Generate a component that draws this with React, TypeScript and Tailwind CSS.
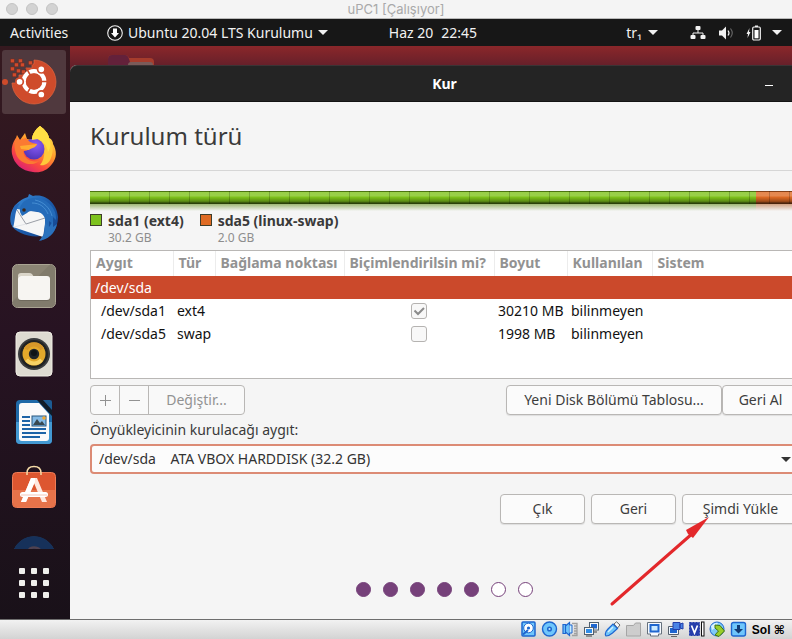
import type { ReactNode } from "react";

const dockIcons: { name: string; active?: boolean; art: ReactNode }[] = [
  { name: "Ubuntu Kurulumu", active: true, art: <InstallerArt /> },
  { name: "Firefox", art: <FirefoxArt /> },
  { name: "Thunderbird", art: <ThunderbirdArt /> },
  { name: "Dosyalar", art: <FilesArt /> },
  { name: "Rhythmbox", art: <RhythmboxArt /> },
  { name: "LibreOffice Writer", art: <WriterArt /> },
  { name: "Ubuntu Software", art: <SoftwareArt /> },
  { name: "Yardım", art: <HelpArt /> },
];

function InstallerArt() {
  const bits = [
    [8.5, 9], [16.5, 9], [12.5, 13], [18.5, 13], [26.5, 11], [8.5, 17], [14.5, 19], [19.5, 20], [10.5, 23],
  ];
  return (
    <>
      <path
        d="M32 10a22 22 0 1 1-22 23h4v-4h3v-4h4v-3h4v-4h5v-4h2z"
        fill="#cf4b2b"
        stroke="#e2653f"
        strokeWidth=".7"
      />
      {bits.map(([x, y]) => (
        <rect key={`${x}-${y}`} x={x} y={y} width="3.8" height="3.8" fill="#d14a2b" stroke="#6d2c22" strokeWidth=".5" />
      ))}
      <circle cx="32" cy="31.500" r="10.300" fill="none" stroke="#fff" strokeWidth="4.200" />
      <path d="M32 31.500H48M32 31.500L24 17.600M32 31.500L24 45.400" stroke="#cf4b2b" strokeWidth="1.600" />
      <circle cx="32" cy="31.500" r="8" fill="#cf4b2b" />
      {[[39.3, 19.3], [39.3, 44.5], [17.6, 31.8]].map(([x, y]) => (
        <circle key={`${x}-${y}`} cx={x} cy={y} r="3.700" fill="#fff" stroke="#cf4b2b" strokeWidth="1.700" />
      ))}
    </>
  );
}

function FirefoxArt() {
  return (
    <>
      <defs>
        <linearGradient id="fxBody" x1=".8" y1=".1" x2=".25" y2="1">
          <stop offset="0" stopColor="#ffe14a" />
          <stop offset=".4" stopColor="#ff9a2b" />
          <stop offset=".7" stopColor="#fb4a3e" />
          <stop offset="1" stopColor="#d81b7a" />
        </linearGradient>
        <radialGradient id="fxGlobe" cx=".6" cy=".3" r=".8">
          <stop offset="0" stopColor="#8a5cf7" />
          <stop offset="1" stopColor="#4a2fb0" />
        </radialGradient>
      </defs>
      <path
        d="M38 8C43 12 46 15 47 20C50 21 51 24 51 26C55 33 55 40 50 46C45 53 38 55 31 54C20 53 12 46 10 36C9 29 11 24 14 20L15 17L18 22L23 15L25 21L30 22C30 16 34 11 38 8Z"
        fill="url(#fxBody)"
      />
      <path d="M38 8C43 12 46 15 47 20C51 24 52 33 49 40C47 46 42 48 38 47C44 40 44 28 36 22L30 22C30 16 34 11 38 8Z" fill="#ffc93a" />
      <circle cx="32" cy="31" r="10.500" fill="url(#fxGlobe)" />
      <path d="M14 20L18 22L24 20C27 24 30 25 35 26C34 29 30 29 28 30C26 33 22 33 21 33C22 41 30 45 37 43C31 49 17 46 14 36C12 30 12 25 14 20Z" fill="#fb7a32" />
      <path d="M18 28L35 26C34 30 29 30 27 32L19 31Z" fill="#ffad32" />
      <path d="M38 8C43 12 46 15 47 20C49 25 49 30 46 34C45 27 41 24 36 21L30 22C30 16 34 11 38 8Z" fill="#ffdf45" />
    </>
  );
}

function ThunderbirdArt() {
  return (
    <>
      <defs>
        <linearGradient id="tbBody" x1="0" y1="0" x2="1" y2="1">
          <stop offset="0" stopColor="#3c90dc" />
          <stop offset=".5" stopColor="#1c5cab" />
          <stop offset="1" stopColor="#123f86" />
        </linearGradient>
      </defs>
      <path d="M27 8L31 10C44 7 55 18 56 31C56 43 49 52 38 55L43 49C32 53 13 48 9 38C6 25 15 14 26 11Z" fill="url(#tbBody)" />
      <path d="M15 23L42 27L44 33L41 51L11 41C10 36 11 29 15 23Z" fill="#f6f6f6" />
      <path d="M15 24L24 38L43 32" fill="none" stroke="#9a9ea6" strokeWidth="1" />
      <path d="M24 38L12 41" fill="none" stroke="#dcdee2" strokeWidth=".8" />
      <path d="M19 28C15 20 23 11 34 12C46 13 55 23 54 34L51 31L51 38L47 35L47 42L43 39L43 33C42 26 30 22 25 27L20 30Z" fill="#246bb9" />
      <path d="M33 14C42 16 48 22 50 30M30 17C38 17 43 21 46 28" fill="none" stroke="#4d96d8" strokeWidth=".8" />
      <path d="M43 37L42 48L37 55C46 53 53 48 55 38L51 41L51 35L47 41Z" fill="#2a72bd" />
      <path d="M13 19C9 25 8 35 11 42C14 31 12 26 18 17Z" fill="#2467b7" />
      <circle cx="22" cy="24" r="1.800" fill="#3c2618" />
    </>
  );
}

function FilesArt() {
  return (
    <>
      <rect x="10.500" y="10.500" width="43" height="43" rx="5" fill="#8b8474" stroke="#aaa493" />
      <path d="M10 48L48 10.500Q53 10 53 15V49Q53 53 48 53H15Q10 53 10 48Z" fill="#777163" opacity=".5" />
      <path d="M16 22Q16 19 19 19H27Q29 19 30 20L32 23V28H16Z" fill="#dbd6ca" />
      <rect x="16" y="22" width="32" height="25" rx="3" fill="#5d584c" opacity=".5" />
      <rect x="16" y="22" width="32" height="24" rx="3" fill="#f7f5f2" />
    </>
  );
}

function RhythmboxArt() {
  return (
    <>
      <rect x="14" y="10" width="36" height="44" rx="4" fill="#dedbd1" stroke="#f1eee5" />
      <circle cx="32" cy="32" r="16" fill="#3a3c3e" />
      <circle cx="32" cy="32" r="14" fill="#202223" />
      <circle cx="32" cy="32" r="11.500" fill="#e2a82b" />
      <path d="M22 26A11.500 11.500 0 0 1 42 26L32 32Z" fill="#d6982a" />
      <path d="M23 39A11.500 11.500 0 0 0 41 39L32 32Z" fill="#f6d265" />
      <circle cx="32" cy="32" r="7.500" fill="#e2a82b" />
      <circle cx="32" cy="32" r="5.200" fill="#202528" />
      <circle cx="32" cy="31" r="3" fill="#101416" />
    </>
  );
}

function WriterArt() {
  return (
    <>
      <path d="M18 10H40L50 21V50Q50 54 46 54H18Q14 54 14 50V14Q14 10 18 10Z" fill="#1f6aa8" />
      <path d="M14 32H50V50Q50 54 46 54H18Q14 54 14 50Z" fill="#4399d2" />
      <path d="M20 13H37L47 24V48Q47 51 44 51H20Q17 51 17 48V16Q17 13 20 13Z" fill="#fafafa" />
      <path d="M35 10H41L50 20V26Z" fill="#101c28" />
      <path d="M41 10H48Q50 10 50 12V20Z" fill="#1c5c93" />
      <path d="M20 27H28M20 31H28M20 35H28M20 39H44M20 43H44M20 47H38" stroke="#1d64a7" strokeWidth="2" />
      <rect x="30" y="26" width="14" height="10" fill="#84bae5" stroke="#27567f" />
      <path d="M31 35L35 29L38 33L40 31L43 35Z" fill="#394850" />
      <circle cx="42" cy="28" r="1.800" fill="#f3a72d" />
    </>
  );
}

function SoftwareArt() {
  return (
    <>
      <rect x="10.500" y="14.500" width="43" height="35" rx="4" fill="#dd5630" stroke="#ed7c56" />
      <path d="M11 32H53V45Q53 49 49 49H15Q11 49 11 45Z" fill="#e6734a" />
      <path d="M25 17V15Q25 8.500 32 8.500T39 15V17" fill="none" stroke="#f5dba7" strokeWidth="1.500" />
      <path d="M29 20H35L45 44H40L32 25L24 44H19Z" fill="#ffe8df" />
      <path d="M29 20H33V24L24 44H19Z" fill="#fff" />
      <rect x="18" y="34" width="28" height="5" rx="2.500" fill="#fff" />
      <path d="M19 37H45" stroke="#f0b8a5" strokeWidth=".8" />
    </>
  );
}

function HelpArt() {
  return (
    <>
      <circle cx="32" cy="32.500" r="21.500" fill="#1b3a66" stroke="#335986" />
      <path d="M12 23A22 22 0 0 1 52 23Z" fill="#16315a" />
      <path d="M27 24Q28 21.500 32 21.500T38 24" fill="none" stroke="#4f4250" strokeWidth="2.500" />
    </>
  );
}

function Caret({ className = "" }: { className?: string }) {
  return (
    <svg viewBox="0 0 10 5" className={`h-[5px] w-[10px] shrink-0 ${className}`} aria-hidden="true">
      <path d="M0 0H10L5 5Z" fill="currentColor" />
    </svg>
  );
}

function Panel() {
  return (
    <header className="flex h-[27px] shrink-0 items-center bg-[#171717] text-[14px] leading-none text-[#f2f2f2]">
      <div className="flex flex-[390] items-center whitespace-nowrap pl-[10px]">
        <button type="button" className="w-[97px] text-left">Activities</button>
        <button type="button" className="flex items-center gap-[5px]">
          <svg viewBox="0 0 16 16" className="size-4" aria-hidden="true">
            <circle cx="8" cy="8" r="7.300" fill="none" stroke="#f2f2f2" strokeWidth="1.100" />
            <path d="M6 3.500H10V8H12L8 12.500L4 8H6Z" fill="#fff" />
          </svg>
          Ubuntu 20.04 LTS Kurulumu
          <Caret />
        </button>
      </div>
      <button type="button" className="flex gap-2 whitespace-nowrap">
        <span>Haz 20</span>
        <span>22:45</span>
      </button>
      <div className="flex flex-[314] items-center justify-end pr-[10px]">
        <button type="button" className="mr-[32px] flex items-center gap-[6px]">
          <span>tr₁</span>
          <Caret />
        </button>
        <button type="button" aria-label="Sistem" className="flex items-center">
          <svg viewBox="0 0 16 16" className="mr-3 size-4" aria-hidden="true">
            <path d="M8 4V8M3 11V8H13V11" fill="none" stroke="#f2f2f2" />
            <rect x="5.500" y="1" width="5" height="4" rx="1" fill="#f2f2f2" />
            <rect x="0.500" y="10" width="5" height="4" rx="1" fill="#f2f2f2" />
            <rect x="10.500" y="10" width="5" height="4" rx="1" fill="#f2f2f2" />
          </svg>
          <svg viewBox="0 0 16 16" className="mr-3 size-4" aria-hidden="true">
            <path d="M1 5.500H4L8 1.500V14.500L4 10.500H1Z" fill="#f2f2f2" />
            <path d="M10 5.500Q12 8 10 10.500" fill="none" stroke="#f2f2f2" strokeWidth="1.200" />
            <path d="M12.500 3.500Q16 8 12.500 12.500" fill="none" stroke="#6a6a6a" strokeWidth="1.100" />
          </svg>
          <svg viewBox="0 0 16 16" className="mr-[10px] size-4" aria-hidden="true">
            <path d="M3.500 3L0.500 9H2L1.500 13L4.500 7H3Z" fill="#f2f2f2" />
            <path d="M9 0.500H12V2H9Z" fill="#f2f2f2" />
            <rect x="6.700" y="2" width="7.600" height="13" rx="1.200" fill="none" stroke="#f2f2f2" strokeWidth="1.200" />
            <rect x="8.500" y="5" width="4" height="8.300" fill="#fff" />
          </svg>
          <Caret />
        </button>
      </div>
    </header>
  );
}

function Dock() {
  return (
    <nav className="flex w-[70px] shrink-0 flex-col bg-linear-to-b from-[#35191f] via-[#271322] to-[#191119]">
      <div className="flex min-h-0 flex-1 flex-col gap-1 overflow-hidden pl-[2px] pt-1">
        {dockIcons.map((icon) => (
          <button
            key={icon.name}
            type="button"
            aria-label={icon.name}
            className={`relative size-16 shrink-0 rounded-[3px] ${icon.active ? "bg-[#50393e]" : ""}`}
          >
            {icon.active && <span className="absolute top-[29px] left-0 size-[6px] rounded-full bg-[#cf4b2b]" />}
            <svg viewBox="0 0 64 64" className="size-16 overflow-visible" aria-hidden="true">
              {icon.art}
            </svg>
          </button>
        ))}
      </div>
      <button type="button" aria-label="Uygulamaları göster" className="grid h-[70px] grid-cols-[6px_6px_6px] content-start justify-center gap-[6px] pt-[19px] pr-[2px]">
        {Array.from({ length: 9 }, (_, i) => (
          <span key={i} className="size-[6px] rounded-[1px] bg-[#efefec]" />
        ))}
      </button>
    </nav>
  );
}

const partitions = [
  { device: "/dev/sda1", type: "ext4", format: true, size: "30210 MB", used: "bilinmeyen" },
  { device: "/dev/sda5", type: "swap", format: false, size: "1998 MB", used: "bilinmeyen" },
];

const headings = ["Aygıt", "Tür", "Bağlama noktası", "Biçimlendirilsin mi?", "Boyut", "Kullanılan", "Sistem"];

const button =
  "h-[30px] rounded-[4px] border border-[#b9b7b5] bg-[#fbfbfb] text-center text-[#3d3d3d] shadow-[0_1px_1px_#00000018]";

function FormatBox({ checked, label }: { checked: boolean; label: string }) {
  return (
    <label className="mx-auto grid size-4 place-items-center">
      <input
        type="checkbox"
        defaultChecked={checked}
        aria-label={label}
        className="col-start-1 row-start-1 size-4 appearance-none rounded-[3px] border border-[#b5b3b1] bg-[#f8f8f8]"
      />
      {checked && (
        <svg viewBox="0 0 16 16" className="pointer-events-none col-start-1 row-start-1 size-4" aria-hidden="true">
          <path d="M3.500 7.500L7 11L13 5" fill="none" stroke="#8b8b8b" strokeWidth="2" />
        </svg>
      )}
    </label>
  );
}

function PartitionTable() {
  return (
    <div className="h-[129px] border border-[#b9b7b5] bg-white">
      <table className="w-full table-fixed border-collapse whitespace-nowrap text-[14px] leading-[22px] text-[#111]">
        <colgroup>
          <col className="w-[82px]" />
          <col className="w-[42px]" />
          <col className="w-[129px]" />
          <col className="w-[150px]" />
          <col className="w-[73px]" />
          <col className="w-[85px]" />
          <col />
        </colgroup>
        <thead>
          <tr className="h-[25px] text-left text-[14px] text-[#929292]">
            {headings.map((h) => (
              <th key={h} className="border-r border-[#ececec] pt-0 pr-0 pb-[2px] pl-[5px] font-bold last:border-r-0">{h}</th>
            ))}
          </tr>
        </thead>
        <tbody>
          <tr className="h-[23px] bg-[#cb492b] text-white">
            <td colSpan={7} className="py-0 pl-1">/dev/sda</td>
          </tr>
          {partitions.map((p) => (
            <tr key={p.device} className="h-[23px]">
              <td className="py-0 pl-[10px]">{p.device}</td>
              <td className="py-0 pl-1">{p.type}</td>
              <td />
              <td className="p-0"><FormatBox checked={p.format} label={`${p.device} biçimlendirilsin`} /></td>
              <td className="py-0 pl-1">{p.size}</td>
              <td className="py-0 pl-1">{p.used}</td>
              <td />
            </tr>
          ))}
        </tbody>
      </table>
    </div>
  );
}

function Legend({ color, name, size }: { color: string; name: string; size: string }) {
  return (
    <li className="flex gap-[6px]">
      <span className={`mt-[3px] size-3 border border-[#3d3d2a] ${color}`} />
      <span>
        <span className="block text-[14px] leading-[19px] font-bold text-[#3a3a3a]">{name}</span>
        <span className="block text-[12px] leading-[16px] text-[#8d8d8d]">{size}</span>
      </span>
    </li>
  );
}

function InstallerWindow() {
  return (
    <section className="-mr-[27px] flex flex-1 flex-col rounded-tl-[7px] bg-[#f5f5f5] text-[14px] leading-5">
      <div className="grid h-[37px] shrink-0 grid-cols-[1fr_auto_1fr] items-center rounded-tl-[7px] border-t border-b border-t-[#3b3435] border-b-[#141414] bg-[#242424] text-white">
        <h2 className="col-start-2 text-[14px] font-bold">Kur</h2>
        <button type="button" aria-label="Küçült" className="mr-[46px] flex h-6 w-2 items-center justify-self-end">
          <span className="mt-[3px] h-px w-2 bg-white" />
        </button>
      </div>
      <h1 className="h-[69px] shrink-0 border-b border-[#d6d6d6] px-5 pt-[18px] text-[24px] leading-8 text-[#3a3a3a]">Kurulum türü</h1>
      <div className="flex flex-1 flex-col px-5 pt-5">
        <div
          role="img"
          aria-label="Disk bölümleri"
          className="h-[13px] bg-[repeating-linear-gradient(90deg,#0000_0_19px,#0003_19px_20px),linear-gradient(#0006_0_1px,#fff3_1px,#fff3_5px,#0000_6px,#0004_10px,#0006_11px,#000a_12px),linear-gradient(90deg,#7fc31c_94%,#df6b24_94%)]"
        />
        <div className="h-[7px] bg-[linear-gradient(#f5f5f544,#f5f5f5),linear-gradient(90deg,#7fa046_94%,#c28257_94%)]" />
        <ul className="flex gap-4">
          <Legend color="bg-[#7dc21e]" name="sda1 (ext4)" size="30.2 GB" />
          <Legend color="bg-[#df6b24]" name="sda5 (linux-swap)" size="2.0 GB" />
        </ul>
        <div className="mt-1">
          <PartitionTable />
        </div>
        <div className="mt-[6px] flex justify-between">
          <div className="flex h-[30px] overflow-hidden rounded-[4px] border border-[#b9b7b5] bg-[#f9f9f9] text-[#929292]">
            <button type="button" aria-label="Ekle" className="grid w-[29px] place-items-center border-r border-[#b9b7b5]">
              <svg viewBox="0 0 11 11" className="size-[11px]" aria-hidden="true">
                <path d="M0 5.500H11M5.500 0V11" stroke="currentColor" />
              </svg>
            </button>
            <button type="button" aria-label="Kaldır" className="grid w-[29px] place-items-center border-r border-[#b9b7b5]">
              <svg viewBox="0 0 11 11" className="size-[11px]" aria-hidden="true">
                <path d="M0 5.500H11" stroke="currentColor" />
              </svg>
            </button>
            <button type="button" className="w-[95px]">Değiştir...</button>
          </div>
          <div className="flex">
            <button type="button" className={`w-[216px] ${button}`}>Yeni Disk Bölümü Tablosu...</button>
            <button type="button" className={`w-[77px] ${button}`}>Geri Al</button>
          </div>
        </div>
        <label htmlFor="boot" className="mt-[5px] text-[#3a3a3a]">Önyükleyicinin kurulacağı aygıt:</label>
        <div className="mt-1 grid">
          <select
            id="boot"
            className="col-start-1 row-start-1 h-[30px] w-full appearance-none rounded-[4px] border-2 border-[#dc8b75] bg-[#fcfcfc] px-[7px] text-[#333]"
          >
            <option>{"/dev/sda\u00a0\u00a0\u00a0\u00a0ATA VBOX HARDDISK (32.2 GB)"}</option>
          </select>
          <Caret className="pointer-events-none col-start-1 row-start-1 mr-2 self-center justify-self-end text-[#333]" />
        </div>
        <div className="mt-5 flex justify-end gap-[6px]">
          <button type="button" className={`w-[85px] ${button}`}>Çık</button>
          <button type="button" className={`w-[85px] ${button}`}>Geri</button>
          <button type="button" className={`w-[117px] ${button}`}>Şimdi Yükle</button>
        </div>
        <div className="mt-auto mb-[22px] flex justify-center gap-3">
          {[1, 2, 3, 4, 5, 6, 7].map((n) => (
            <span key={n} className={`size-[15px] rounded-full border border-[#76417a] ${n < 6 ? "bg-[#76417a]" : "bg-white"}`} />
          ))}
        </div>
      </div>
    </section>
  );
}

const blue = "#1e66cf";
const sky = "#6fc6fb";

const statusIcons: { name: string; art: ReactNode }[] = [
  {
    name: "Sabit disk",
    art: (
      <>
        <rect x="2" y="1" width="13" height="14" rx="1" fill={sky} stroke={blue} strokeWidth="1.500" />
        <circle cx="8.500" cy="7" r="4.800" fill="#fff" stroke={blue} />
        <circle cx="8.500" cy="7" r="1.600" fill={blue} />
        <path d="M3 13.500L8 9" stroke={blue} strokeWidth="2" />
      </>
    ),
  },
  {
    name: "Optik sürücü",
    art: (
      <>
        <circle cx="8.500" cy="8" r="7" fill={sky} stroke={blue} strokeWidth="1.400" />
        <circle cx="8.500" cy="8" r="1.800" fill="#b9e6ff" stroke={blue} strokeWidth="1.500" />
      </>
    ),
  },
  {
    name: "Ses",
    art: (
      <>
        <path d="M10 2.500H15V14.500H10M12 5H15M12 7.500H15M12 10H15M12 12.500H15" fill="none" stroke="#a0a0a0" strokeWidth="1.300" />
        <path d="M1 3.500H3.500V12.500H1ZM3.500 5L7.500 1.500V14.500L3.500 11Z" fill={sky} stroke={blue} strokeWidth="1.200" />
        <path d="M7.500 4H10V12H7.500" fill="#c6ecff" stroke={blue} />
      </>
    ),
  },
  {
    name: "Ağ",
    art: (
      <>
        <rect x="6.500" y="1.500" width="9" height="7.500" fill="#f8f8f8" stroke="#51606e" />
        <rect x="8" y="3" width="6" height="4.500" fill={blue} />
        <path d="M9 11H14M3 15H9" stroke="#777" strokeWidth="1.500" />
        <rect x="1.500" y="6.500" width="9" height="7" fill="#f8f8f8" stroke="#51606e" />
        <rect x="3" y="8" width="6" height="4" fill="#2f8de8" />
      </>
    ),
  },
  {
    name: "USB",
    art: (
      <>
        <path d="M10 3L12.500 0.800L16 4L13.500 7Z" fill="#f8f8f8" stroke="#666" />
        <path d="M2 15Q0 12 4 8L9 3L13.500 7.500L8.500 12Q5 15 2 15Z" fill={sky} stroke={blue} strokeWidth="1.200" />
        <path d="M4 11L9 6" stroke="#d3f0ff" strokeWidth="1.500" />
      </>
    ),
  },
  {
    name: "Paylaşılan klasörler",
    art: <path d="M1.500 15V4.500H8.500L10.500 2H15.500V15Z" fill="#cdcdcd" stroke="#a5a5a5" />,
  },
  {
    name: "Ekran",
    art: (
      <>
        <path d="M1.500 1.500H15.500V13H12.500V15H4.500V13H1.500Z" fill="#f7fbff" stroke="#66717d" />
        <rect x="4.500" y="4" width="8" height="6.500" fill="#c9e9ff" stroke={blue} strokeWidth="2" />
      </>
    ),
  },
  {
    name: "Kayıt",
    art: (
      <>
        <path d="M1.500 5.500H11.500V13.500H1.500Z" fill="#eef6ff" stroke="#56616e" />
        <rect x="3" y="7" width="7" height="5" fill={blue} />
        <path d="M6 1.500H13V8.500H6ZM13 3L16 2V8L13 7Z" fill="#4a84e6" stroke="#243faa" />
        <path d="M4 15.500H10" stroke="#666" />
      </>
    ),
  },
  {
    name: "Sanallaştırma",
    art: (
      <>
        <rect x="1.500" y="1.500" width="10" height="13" fill="#263eab" stroke="#263eab" strokeDasharray="2 1" />
        <path d="M3.500 4.500L6.500 12L9.500 4.500" fill="none" stroke="#fff" strokeWidth="1.700" />
        <rect x="13.500" y="1" width="2.500" height="14" fill="#fff" stroke="#111" />
      </>
    ),
  },
  {
    name: "Fare",
    art: (
      <>
        <circle cx="8" cy="8" r="7" fill="#7fc9f6" stroke={blue} />
        <path d="M2 5Q6 1 9 2L6 7L3 9Z" fill="#d8f2ff" />
        <path d="M6 4L11 4.500L15.500 10L10 15.500L6 14L9.500 10L6 7Z" fill="#99ce2b" stroke="#41730e" />
      </>
    ),
  },
  {
    name: "Klavye",
    art: (
      <>
        <rect x="1.500" y="1.500" width="14" height="13.500" rx="2" fill={sky} stroke={blue} strokeWidth="1.400" />
        <path d="M7 4H10V8H13L8.500 12.500L4 8H7Z" fill="#123b75" />
      </>
    ),
  },
];

function StatusBar() {
  return (
    <footer className="flex h-5 shrink-0 items-center justify-end border-t border-[#6e6e6e] bg-linear-to-b from-[#f2f2f2] to-[#d3d3d3] pr-[7px]">
      <ul className="flex">
        {statusIcons.map((icon) => (
          <li key={icon.name} className="flex w-[21px] justify-center">
            <svg viewBox="0 0 17 17" role="img" aria-label={icon.name} className="size-[17px]">
              {icon.art}
            </svg>
          </li>
        ))}
      </ul>
      <span className="ml-[3px] font-['Liberation_Sans','DejaVu_Sans',sans-serif] text-[12px] leading-none font-bold text-black">Sol ⌘</span>
    </footer>
  );
}

export default function App() {
  return (
    <div className="relative flex h-screen flex-col overflow-hidden bg-[#171717] font-['Noto_Sans',sans-serif]">
      <div className="grid h-[19px] shrink-0 grid-cols-[1fr_auto_1fr] items-center border-b border-[#b9b9b9] bg-[#f4f4f4]">
        <div className="flex gap-2 pl-[6px]">
          {["Kapat", "Küçült", "Büyüt"].map((n) => (
            <button key={n} type="button" aria-label={n} className="size-3 rounded-full border border-[#c4c4c4] bg-[#d3d3d3]" />
          ))}
        </div>
        <div className="font-[Inter,sans-serif] text-[13px] leading-none text-[#a9a9a9]">uPC1 [Çalışıyor]</div>
      </div>
      <Panel />
      <div className="flex min-h-0 flex-1">
        <Dock />
        <main className="flex min-w-0 flex-1 flex-col overflow-hidden bg-[linear-gradient(#8b272a,#67202a_19px,#4a1a26_40px)]">
          <svg viewBox="0 0 48 10" className="mt-[9px] ml-[38px] h-[10px] w-12 shrink-0" aria-hidden="true">
            <path d="M0 10V4Q0 0 4 0H17Q20 0 21 3H42Q46 3 46 7V10Z" fill="#a63c2c" />
            <path d="M0 10V4Q0 0 4 0H17Q20 0 21 4L23 10Z" fill="#63213a" />
            <path d="M20 10Q20 7 23 7H42Q45 7 45 10Z" fill="#7a5b59" />
          </svg>
          <InstallerWindow />
        </main>
      </div>
      <StatusBar />
      <svg viewBox="0 0 102 92" className="pointer-events-none absolute right-[81px] bottom-[31px] h-[92px] w-[102px]" aria-hidden="true">
        <path d="M3 88L84 17" stroke="#e3282b" strokeWidth="3" strokeLinecap="round" />
        <path d="M100 1L77 14L79 18L84 22Z" fill="#e3282b" />
      </svg>
    </div>
  );
}
